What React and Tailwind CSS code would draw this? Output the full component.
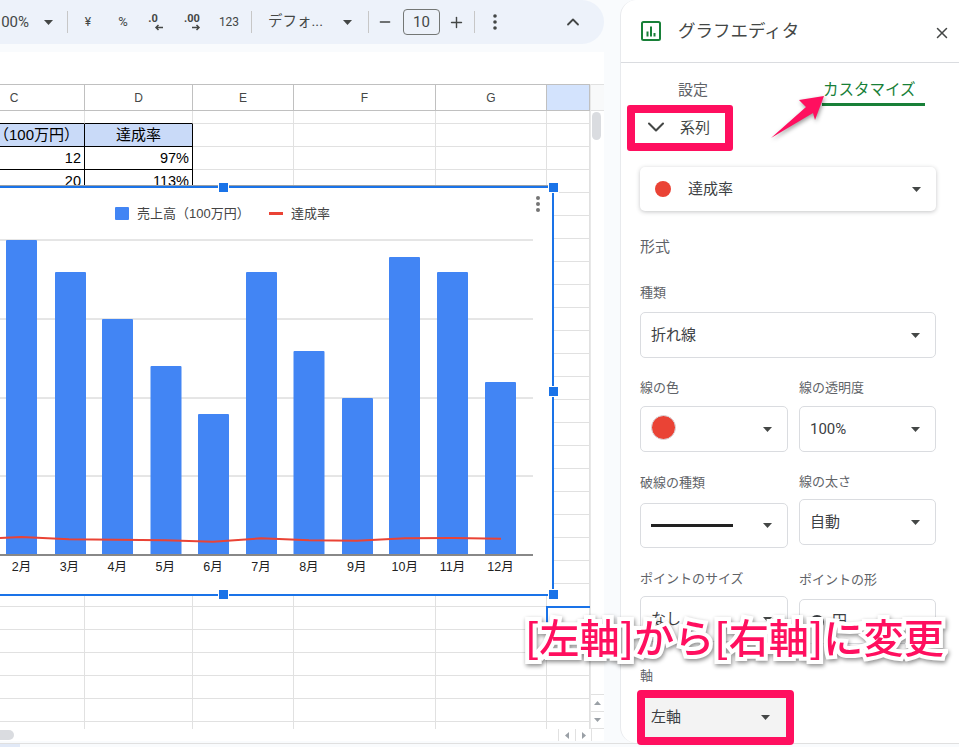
import React from "react";
import { ChevronDown, ChevronUp, Minus, Plus, X } from "lucide-react";

const colWidths = ["w-[141px]", "w-[108px]", "w-[101px]", "w-[142px]", "w-[111px]", "w-[43px]"];
const colNames = ["C", "D", "E", "F", "G", ""];

const bars = [
  [6, 240],
  [55, 272],
  [102, 319],
  [150.5, 366],
  [198, 414],
  [246, 272],
  [293.5, 351],
  [342, 398],
  [389, 257],
  [437, 272],
  [485, 382],
];
const months = ["2月", "3月", "4月", "5月", "6月", "7月", "8月", "9月", "10月", "11月", "12月"];

function Caret({ className = "" }) {
  return (
    <svg width="9" height="5" viewBox="0 0 9 5" className={className}>
      <path d="M0 0h9L4.500 5z" fill="#444746" />
    </svg>
  );
}

function Sep() {
  return <div className="w-px h-[22px] bg-[#c7c7c7] shrink-0" />;
}

function Dots({ color = "#444746" }) {
  return (
    <svg width="4" height="16" viewBox="0 0 4 16">
      <circle cx="2" cy="2" r="1.8" fill={color} />
      <circle cx="2" cy="8" r="1.8" fill={color} />
      <circle cx="2" cy="14" r="1.8" fill={color} />
    </svg>
  );
}

function Toolbar() {
  return (
    <div className="h-[44px] bg-[#edf2fa] rounded-r-[22px] flex items-center text-[#444746] overflow-hidden">
      <div className="w-[29px] shrink-0 flex justify-end text-[15px] whitespace-nowrap">100%</div>
      <div className="w-[38px] shrink-0 flex justify-center"><Caret /></div>
      <Sep />
      <div className="w-[40px] shrink-0 text-center text-[12px]">¥</div>
      <div className="w-[30px] shrink-0 text-center text-[13px]">%</div>
      <div className="w-[34px] shrink-0 flex flex-col items-center leading-none">
        <span className="text-[11px] font-bold h-[11px] pr-1">.0</span>
        <svg width="10" height="7" viewBox="0 0 10 7" className="ml-2">
          <path d="M9 3.5H2M4.500 1L2 3.500 4.500 6" fill="none" stroke="#444746" strokeWidth="1.500" />
        </svg>
      </div>
      <div className="w-[40px] shrink-0 flex flex-col items-center leading-none">
        <span className="text-[11px] font-bold h-[11px]">.00</span>
        <svg width="10" height="7" viewBox="0 0 10 7" className="ml-2">
          <path d="M1 3.500h7M5.500 1L8 3.500 5.500 6" fill="none" stroke="#444746" strokeWidth="1.500" />
        </svg>
      </div>
      <div className="w-[34px] shrink-0 text-center text-[12px]">123</div>
      <div className="w-[5px] shrink-0" />
      <Sep />
      <div className="w-[16px] shrink-0" />
      <div className="w-[75px] shrink-0 text-[14.500px] whitespace-nowrap">デフォ...</div>
      <Caret />
      <div className="w-[16px] shrink-0" />
      <Sep />
      <div className="w-[32px] shrink-0 flex justify-center"><Minus size={16} strokeWidth={2} /></div>
      <div className="ml-[2px] w-[37px] h-[26px] shrink-0 border border-[#747775] rounded-[4px] flex items-center justify-center text-[15px]">
        10
      </div>
      <div className="w-[32px] shrink-0 flex justify-center"><Plus size={17} strokeWidth={2} /></div>
      <div className="w-[2px] shrink-0" />
      <Sep />
      <div className="w-[40px] shrink-0 flex justify-center"><Dots /></div>
      <div className="ml-[38px] w-[40px] shrink-0 flex justify-center"><ChevronUp size={20} strokeWidth={2.2} /></div>
    </div>
  );
}

function Cell({ col, h, black, blue, align, children }) {
  return (
    <div
      className={`${colWidths[col]} ${h} shrink-0 border-b border-r flex items-center px-[3px] pt-[1px] whitespace-nowrap text-black ${
        black ? "border-black" : "border-[#e1e1e1]"
      } ${blue ? "bg-[#c9daf8] text-[15px]" : "text-[14.500px]"} ${align === "right" ? "justify-end" : "justify-center"}`}
    >
      {children}
    </div>
  );
}

function Grid() {
  const rows = [];
  // 一番上は途中で切れている行
  rows.push(
    <div key="top" className="flex">
      {colWidths.map((w, i) => (
        <div
          key={i}
          className={`${w} h-[13px] shrink-0 border-r border-r-[#e1e1e1] border-b ${i < 2 ? "border-b-black" : "border-b-[#e1e1e1]"}`}
        />
      ))}
    </div>
  );
  const table = [
    [["売上高（100万円）", "center"], ["達成率", "center"], true],
    [["12", "right"], ["97%", "right"], false],
    [["20", "right"], ["113%", "right"], false],
  ];
  for (let r = 0; r < 26; r++) {
    const t = table[r];
    rows.push(
      <div key={r} className="flex">
        <Cell col={0} h="h-[23px]" black={!!t} blue={t && t[2]} align={t && t[0][1]}>
          {t && t[0][0]}
        </Cell>
        <Cell col={1} h="h-[23px]" black={!!t} blue={t && t[2]} align={t && t[1][1]}>
          {t && t[1][0]}
        </Cell>
        {[2, 3, 4, 5].map((c) => (
          <Cell key={c} col={c} h="h-[23px]" />
        ))}
      </div>
    );
  }
  rows.push(
    <div key="bottom" className="flex h-[7px]">
      {colWidths.map((w, i) => (
        <div key={i} className={`${w} shrink-0 border-r border-[#e1e1e1]`} />
      ))}
    </div>
  );
  return <div>{rows}</div>;
}

function Sheet() {
  return (
    <div className="mt-[8px] font-['Liberation_Sans','Noto_Sans_CJK_JP',sans-serif]">
      <div className="h-[32px] bg-white" />
      <div className="flex bg-white">
        <div className="w-[590px] h-[645px] overflow-hidden shrink-0 relative">
          <div className="ml-[-56px] w-[646px]">
            <div className="flex h-[27px] border-y border-[#c0c0c0] bg-white">
              {colNames.map((n, i) => (
                <div
                  key={i}
                  className={`${colWidths[i]} shrink-0 border-r border-[#c0c0c0] flex items-center justify-center text-[12px] text-[#444746] ${
                    i === 5 ? "bg-[#d3e3fd]" : ""
                  }`}
                >
                  {n}
                </div>
              ))}
            </div>
            <Grid />
          </div>
          {/* 選択中のセル */}
          <div className="absolute left-[546px] top-[522px] w-[44px] h-[24px] border-t-2 border-l-2 border-[#1a73e8]" />
        </div>
        <div className="w-[14px] h-[645px] shrink-0 flex flex-col border-l border-[#e8e8e8]">
          <div className="h-[27px] bg-[#f8f9fa] border-y border-[#e1e1e1]" />
          <div className="h-[1px]" />
          <div className="ml-[1px] w-[9px] h-[28px] rounded-full bg-[#dadce0]" />
          <div className="flex-1" />
          <div className="h-[18px] border-y border-[#e1e1e1] flex items-center justify-center">
            <svg width="7" height="4" viewBox="0 0 7 4"><path d="M0 4h7L3.500 0z" fill="#9aa0a6" /></svg>
          </div>
          <div className="h-[17px] border-b border-[#e1e1e1] flex items-center justify-center">
            <svg width="7" height="4" viewBox="0 0 7 4"><path d="M0 0h7L3.500 4z" fill="#9aa0a6" /></svg>
          </div>
        </div>
      </div>
      <div className="h-[12px] bg-white flex items-center">
        <div className="w-[14px] h-[10px] rounded-r-full bg-[#dadce0]" />
        <div className="ml-[544px] w-[18px] h-full border-x border-[#e1e1e1] flex items-center justify-center">
          <svg width="4" height="7" viewBox="0 0 4 7"><path d="M4 0v7L0 3.500z" fill="#9aa0a6" /></svg>
        </div>
        <div className="w-[16px] h-full border-r border-[#e1e1e1] flex items-center justify-center">
          <svg width="4" height="7" viewBox="0 0 4 7"><path d="M0 0v7l4-3.500z" fill="#9aa0a6" /></svg>
        </div>
      </div>
    </div>
  );
}

function Handle({ className }) {
  return <div className={`absolute w-[11px] h-[11px] bg-[#1a73e8] border border-white ${className}`} />;
}

function Chart() {
  const linePts = "0,538 21.500,537 69,539.300 117,539.700 165,540.300 213,541.700 261,538.300 309,540.300 357,540.700 405,538.300 453,538 501,538.700";
  return (
    <div className="absolute left-0 top-[186px] w-[554px] h-[410px] bg-white border-y-2 border-r-2 border-[#1a73e8] shadow-[0_-1px_0_#9aa0a6] font-['Liberation_Sans','Noto_Sans_CJK_JP',sans-serif]">
      <svg width="552" height="406" viewBox="0 188 552 406" className="block">
        {[240, 319, 398, 476].map((y) => (
          <line key={y} x1="0" x2="533" y1={y} y2={y} stroke="#cccccc" />
        ))}
        {bars.map(([x, y]) => (
          <rect key={x} x={x} y={y} width="31" height={555 - y} rx="1" fill="#4285f4" />
        ))}
        <line x1="0" x2="533" y1="555" y2="555" stroke="#888888" strokeWidth="2" />
        <polyline points={linePts} fill="none" stroke="#ea4335" strokeWidth="2" />
        {months.map((m, i) => (
          <text key={m} x={21.5 + i * 47.9} y="571" textAnchor="middle" fontSize="12.500" fill="#222222">
            {m}
          </text>
        ))}
        <rect x="115" y="207" width="14" height="13" rx="1" fill="#4285f4" />
        <text x="137" y="218" fontSize="13" fill="#444444">売上高（100万円）</text>
        <rect x="269" y="212" width="14" height="3" fill="#ea4335" />
        <text x="291" y="218" fontSize="13" fill="#444444">達成率</text>
        <circle cx="538" cy="198" r="2" fill="#757575" />
        <circle cx="538" cy="204" r="2" fill="#757575" />
        <circle cx="538" cy="210" r="2" fill="#757575" />
      </svg>
      <Handle className="left-[218px] top-[-6px]" />
      <Handle className="left-[548px] top-[-6px]" />
      <Handle className="left-[548px] top-[198px]" />
      <Handle className="left-[218px] top-[401px]" />
      <Handle className="left-[548px] top-[401px]" />
    </div>
  );
}

function Label({ className = "", children }) {
  return <div className={`h-[18px] flex items-center text-[13px] text-[#5f6368] whitespace-nowrap ${className}`}>{children}</div>;
}

function Select({ h = "h-[46px]", caret = "pr-[15px]", children }) {
  return (
    <div className={`${h} border border-[#dadce0] rounded-[5px] bg-white flex items-center justify-between pl-[10px] ${caret} text-[15px] text-[#3c4043] overflow-hidden`}>
      <div className="flex items-center gap-2">{children}</div>
      <Caret />
    </div>
  );
}

function Editor() {
  return (
    <div className="ml-[16px] w-[339px] h-full bg-white rounded-l-[16px] border-l border-[#e8eaed] text-[#3c4043] font-['Roboto','Noto_Sans_CJK_JP',sans-serif]">
      <div className="h-[63px] border-b border-[#dadce0] flex items-center pl-[20px]">
        <svg width="20" height="20" viewBox="0 0 20 20" className="shrink-0">
          <rect x="1" y="1" width="18" height="18" rx="1.500" fill="none" stroke="#188038" strokeWidth="2" />
          <path d="M5.500 10.500h2v5h-2zM9 5.500h2v10H9zM12.500 12h2v3.500h-2z" fill="#188038" />
        </svg>
        <div className="ml-[17px] text-[17.500px] text-[#444746]">グラフエディタ</div>
        <X size={18} strokeWidth={2} className="ml-auto mr-[8px] mt-[3px] text-[#444746]" />
      </div>

      <div className="h-[43px] flex text-[15px]">
        <div className="ml-[57px] w-[144px] pt-[16px] text-[#5f6368]">設定</div>
        <div className="w-[103px] pt-[16px] pl-[1px] text-[15.500px] text-[#188038] border-b-[3px] border-[#188038] whitespace-nowrap">
          カスタマイズ
        </div>
      </div>

      <div className="mt-[-1px] ml-[6px] w-[106px] h-[46px] border-[8px] border-[#ff0f5f] rounded-[3px] flex items-center pl-[12px] text-[15px] text-[#444746] bg-white">
        <ChevronDown size={28} strokeWidth={1.8} className="shrink-0 mt-[-2px] ml-[-5px]" />
        <span className="ml-[10px]">系列</span>
      </div>

      <div className="ml-[19px] w-[296px]">
        <div className="mt-[16px] h-[44px] rounded-[5px] bg-white shadow-[0_1px_4px_rgba(60,64,67,0.3)] flex items-center pl-[15px] pr-[15px]">
          <div className="w-[16px] h-[16px] rounded-full bg-[#ea4335]" />
          <span className="ml-[17px] text-[15px]">達成率</span>
          <Caret className="ml-auto" />
        </div>

        <div className="mt-[26px] h-[20px] flex items-center text-[15px] text-[#5f6368]">形式</div>

        <Label className="mt-[27px]">種類</Label>
        <div className="mt-[10px]"><Select>折れ線</Select></div>

        <div className="flex">
          <div className="w-[148px] shrink-0">
            <Label className="mt-[21px]">線の色</Label>
            <div className="mt-[9px]">
              <Select h="h-[46px]">
                <div className="mt-[-4px] w-[25px] h-[25px] rounded-full bg-[#ea4335] border border-[#dadce0]" />
              </Select>
            </div>
            <Label className="mt-[22px]">破線の種類</Label>
            <div className="mt-[11px]">
              <Select h="h-[45px]">
                <div className="w-[82px] h-[2.500px] bg-[#212121]" />
              </Select>
            </div>
            <Label className="mt-[22px]">ポイントのサイズ</Label>
            <div className="mt-[8px]"><Select>なし</Select></div>
          </div>
          <div className="ml-[11px] w-[137px] shrink-0">
            <Label className="mt-[21px]">線の透明度</Label>
            <div className="mt-[9px]"><Select>100%</Select></div>
            <Label className="mt-[21px]">線の太さ</Label>
            <div className="mt-[8px]"><Select>自動</Select></div>
            <Label className="mt-[26px]">ポイントの形</Label>
            <div className="mt-[10px]">
              <Select h="h-[45px]">
                <div className="w-[14px] h-[14px] rounded-full border-2 border-[#3c4043]" />
                円
              </Select>
            </div>
          </div>
        </div>

        <Label className="mt-[23px]">軸</Label>
      </div>

      <div className="relative z-10 mt-[5px] ml-[16px] w-[157px] h-[55px] border-[8px] border-[#ff0f5f] rounded-[4px] bg-[#f3f3f3] flex items-center justify-between pl-[6px] pr-[16px] text-[15px]">
        左軸
        <Caret />
      </div>
    </div>
  );
}

export default function App() {
  return (
    <div className="relative w-[959px] h-[747px] overflow-hidden bg-[#f9fbfd]">
      <div className="flex h-[743px]">
        <div className="w-[604px] shrink-0 font-['Roboto','Noto_Sans_CJK_JP',sans-serif]">
          <Toolbar />
          <Sheet />
        </div>
        <Editor />
      </div>
      <div className="h-[4px] border-t border-[#e0e0e0]">
        <div className="w-[20px] h-full bg-[#e1e9f7]" />
      </div>

      <Chart />

      {/* 注釈の矢印 */}
      <svg width="70" height="56" viewBox="0 0 70 56" className="absolute left-[765px] top-[90px] drop-shadow-[1px_2px_2px_rgba(0,0,0,0.4)]">
        <path d="M59 6L34 10 41 17 6 48 48 23 50 30z" fill="#ff0f5f" />
      </svg>

      {/* 注釈の文字 */}
      <div className="absolute left-[525px] top-[608px] whitespace-nowrap text-[40.200px] leading-[56px] font-medium text-[#ff0f5f] [-webkit-text-stroke:8px_#fff] [paint-order:stroke_fill] drop-shadow-[1px_2px_2px_rgba(0,0,0,0.45)] font-['Noto_Sans_CJK_JP',sans-serif]">
        [左軸]から[右軸]に変更
      </div>
    </div>
  );
}
